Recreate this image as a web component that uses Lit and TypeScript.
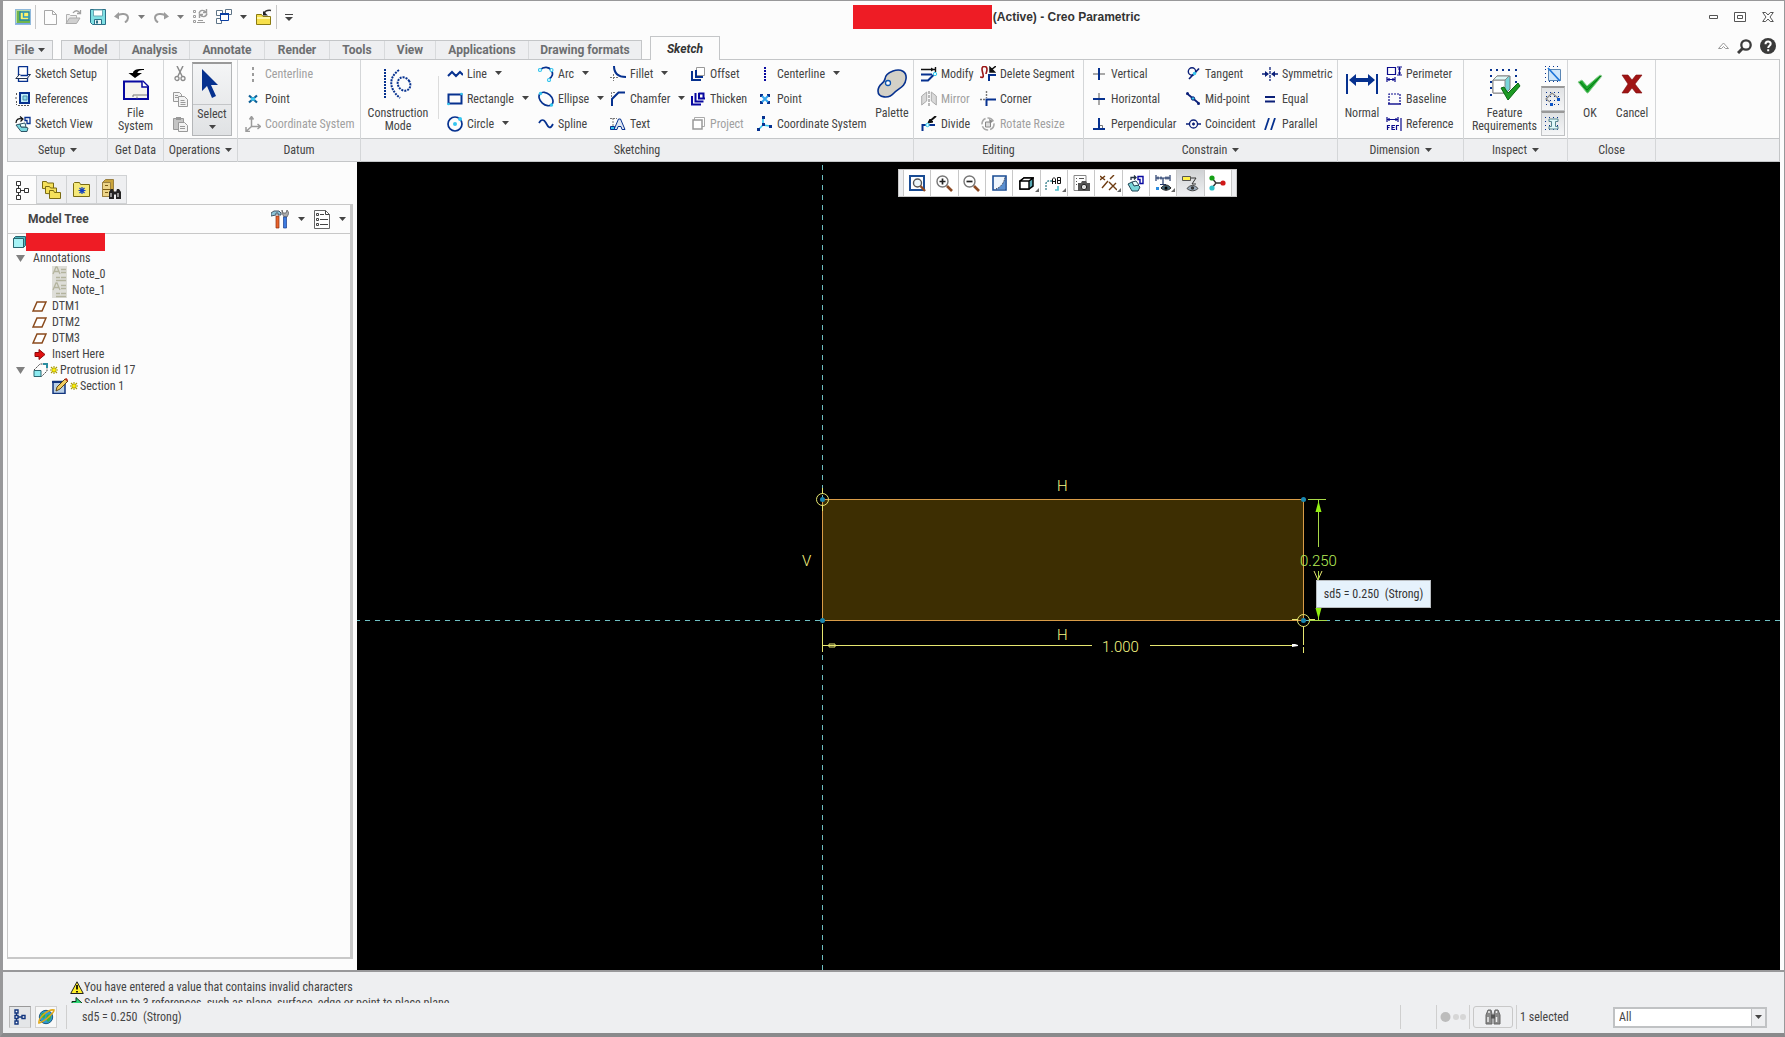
import { LitElement, html, svg, css, nothing, TemplateResult } from "lit";
import { customElement, property } from "lit/decorators.js";

const N = "#06318f";
const C = "#35c5ee";
const G = "#9c9c9c";

interface Glyph { w: number; h: number; body: TemplateResult; }
const g = (w: number, h: number, body: TemplateResult): Glyph => ({ w, h, body });

const GLYPHS: Record<string, Glyph> = {
  arrow: g(7, 4, svg`<path d="M0 0h7L3.5 4z" fill="#444"/>`),
  app: g(16, 16, svg`<rect x=".5" y=".5" width="15" height="15" fill="#b9dba0" stroke="#8fb9dc"/><path d="M2 2h4v9h9v3H2z" fill="#6fb54c"/><path d="M5 3h9v8H5z" fill="#fff36a" stroke="#1e86a8" stroke-width="1.4"/><path d="M8.500 3v5h6" fill="none" stroke="#2a9cc4" stroke-width="1.4"/><path d="M1 14.5h14" stroke="#78a5e8"/>`),
  newFile: g(13, 16, svg`<path d="M.5 1.5h8l4 4v10H.5z" fill="#fdfdfd" stroke="#a8a8a8"/><path d="M8.500 1.5v4h4" fill="none" stroke="#a8a8a8"/>`),
  open: g(17, 16, svg`<path d="M1.500 14V5.500h3l1 1h6V9" fill="#eee" stroke="#b0b0b0"/><path d="M1 14.500L4.500 9H15l-3.500 5.500z" fill="#d0d0d0" stroke="#aaa"/><path d="M8 4c2-3 5-3 7 0M15.500 1v3.500H12" fill="none" stroke="#a0a0a0" stroke-width="1.300"/>`),
  save: g(16, 16, svg`<path d="M.5 .5h15v15h-13l-2-2z" fill="#7fe0e4" stroke="#2b6f86"/><path d="M3.500 1h9v6h-9z" fill="#fff" stroke="#6aa8b4"/><path d="M4.500 10.500h7v5h-7z" fill="#e9f6f7" stroke="#2b6f86"/><path d="M6 11.500h2v3H6z" fill="#2b6f86"/>`),
  undo: g(16, 12, svg`<path d="M3 5c3-3 11-3 11 2 0 2-1 3-3 4.500" fill="none" stroke="${G}" stroke-width="2"/><path d="M0 5.500L5 1v7.500z" fill="${G}"/>`),
  redo: g(16, 12, svg`<path d="M13 5C10 2 2 2 2 7c0 2 1 3 3 4.500" fill="none" stroke="${G}" stroke-width="2"/><path d="M16 5.500L11 1v7.500z" fill="${G}"/>`),
  regen: g(16, 16, svg`<g fill="none" stroke="${G}"><path d="M1.500 1.500h2v2h-2zM1.500 6.500h2v2h-2zM1.500 11.500h2v2h-2zM5 13.500h8M6 11.500h5"/><path d="M7 4.500c1-4 5-4 7-1M15 4.500c-1 4-5 4-7 1M14.500 0v3.500H11M7.500 9V5.500H11" stroke-width="1.400"/></g>`),
  windows: g(16, 16, svg`<g fill="#fff" stroke="#5e7487"><path d="M.5 1.500h6v5h-6zM9.500 .5h6v5h-6zM.5 9.500h5v5h-5z"/></g><path d="M4.500 4.500h8v7h-8z" fill="#fff" stroke="#0b3ea2"/><path d="M4 5h9" stroke="#0b3ea2" stroke-width="2"/>`),
  folderIn: g(17, 17, svg`<path d="M1.500 15.500v-10h5l1.500 2h7.500v8z" fill="#f7e04b" stroke="#8a7a12"/><path d="M2 9h13" stroke="#fff7a8" stroke-width="2"/><path d="M9 4c2-3 4-3 7-2.500" fill="none" stroke="#333" stroke-width="1.500"/><path d="M8 2l5 4.500H8z" fill="#222"/>`),
  more: g(8, 7, svg`<path d="M0 .5h8" stroke="#444"/><path d="M0 3h8L4 7z" fill="#444"/>`),
  sketchSetup: g(16, 16, svg`<path d="M3.500 8v7.500h9V10" fill="none" stroke="${N}" stroke-width="1.300"/><path d="M4.500 8.500H15.500L12 12.500H.8z" fill="#fff" stroke="#20304c"/><path d="M3.500 .5h9v9h-7" fill="#fff" stroke="${N}" stroke-width="1.300"/><path d="M3.500 .5v8" stroke="${N}" stroke-width="1.300"/>`),
  references: g(16, 14, svg`<path d="M5 1h9v10H5z" fill="#bfeef8" stroke="${N}" stroke-width="2"/><path d="M0 6h3M1.500 1v2M1.500 9v4M3 13.500h12" stroke="#555" stroke-dasharray="2 1"/><path d="M8 4h4v4H8z" fill="#8bdcec" stroke="#4c8aa8"/>`),
  sketchView: g(16, 16, svg`<path d="M10 1.500h5v6h-3v-3h-2z" fill="#fff" stroke="${N}" stroke-width="1.300"/><path d="M1 7c0-4 3-5 6-4M5 .5L8 3 5.500 5.500" fill="none" stroke="#111" stroke-width="1.200"/><path d="M1 9l4-1 1 3h4l3 1-1 3.500H6z" fill="#7ad7df" stroke="#2e5566"/><path d="M5 8l5-1 1 4H6z" fill="#e9ffff" stroke="#2e5566"/>`),
  fileSystem: g(26, 32, svg`<path d="M1 13.500h19l5 5V31H1z" fill="#f6f3ee" stroke="#0808a0" stroke-width="2"/><path d="M19 13v6h6" fill="#fff" stroke="#0808a0" stroke-width="1.500"/><path d="M10 29v-2h14M14 28.500v2" fill="none" stroke="#777"/><path d="M12 10L5.500 5H10c0-3 4-4.500 11-4v1c-5 0-6.500 1.500-6.500 3H19z" fill="#000"/>`),
  cut: g(12, 16, svg`<path d="M3 0l5 10M9 0L4 10" stroke="#8c8c8c" stroke-width="1.500"/><g fill="none" stroke="#8c8c8c" stroke-width="1.300"><circle cx="3" cy="12.500" r="2"/><circle cx="9" cy="12.500" r="2"/></g>`),
  copy: g(16, 16, svg`<g fill="#f3f3f3" stroke="#999"><path d="M1.500 1.500h6l2 2v7h-8z"/><path d="M6.500 5.500h6l3 3v7h-9z"/><path d="M3 4.500h3M3 6.500h3M8.500 9.500h4M8.500 11.500h5M8.500 13.500h5"/></g>`),
  paste: g(16, 16, svg`<path d="M1.500 2.500h10v11h-10z" fill="#c4c4c4" stroke="#999"/><path d="M4 1h5v3H4z" fill="#999"/><path d="M6.500 6.500h6l3 3v6h-9z" fill="#f3f3f3" stroke="#999"/><path d="M8 10.500h5M8 12.500h5" stroke="#999"/>`),
  select: g(17, 30, svg`<path d="M1 0v22l5-5 5 12 4-2-5-11h7z" fill="${N}"/>`),
  centerG: g(16, 16, svg`<path d="M8 1v15" stroke="${G}" stroke-width="2" stroke-dasharray="3 3"/>`),
  pointA: g(10, 10, svg`<path d="M1 1.500l8 7M9 1.500l-8 7" stroke="#0d5f96" stroke-width="2.200"/><path d="M3 5h4" stroke="#38c8f0" stroke-width="3"/>`),
  csysG: g(16, 16, svg`<path d="M6.500 2v8.500h8M6.500 10.500L1.500 15M4.500 3.500l2-3 2 3M12.500 8l3 2.500-3 2.500M1 11v4.500h4" fill="none" stroke="${G}" stroke-width="1.500"/>`),
  construction: g(30, 32, svg`<g fill="none" stroke="${N}" stroke-width="2" stroke-dasharray="2 1"><path d="M2 1v30"/><path d="M16 2C6 9 5 20 17 30"/><ellipse cx="21" cy="16" rx="6" ry="7" transform="rotate(-35 21 16)"/></g>`),
  line: g(16, 10, svg`<path d="M1 7l4-4 4 4 4-4 3 3" fill="none" stroke="${N}" stroke-width="2"/>`),
  rect: g(16, 14, svg`<path d="M1.500 2.500h13v9h-13z" fill="none" stroke="${N}" stroke-width="2"/><circle cx="14.500" cy="2" r="1.300" fill="${C}"/><circle cx="1.500" cy="12" r="1.300" fill="${C}"/>`),
  circle: g(16, 16, svg`<circle cx="8" cy="8" r="7" fill="none" stroke="${N}" stroke-width="1.700"/><circle cx="8" cy="8" r="2" fill="${C}"/><circle cx="13" cy="3" r="2" fill="${C}"/>`),
  arc: g(16, 16, svg`<path d="M2 4c4-4 9-3 11 0 3 4 1 7-2 9" fill="none" stroke="${N}" stroke-width="1.700"/><g fill="#fff" stroke="${C}" stroke-width="1.200"><circle cx="2" cy="4" r="1.500"/><circle cx="13.500" cy="4" r="1.500"/><circle cx="11" cy="14" r="1.500"/></g>`),
  ellipse: g(16, 16, svg`<ellipse cx="8" cy="8" rx="8" ry="5.500" transform="rotate(42 8 8)" fill="none" stroke="${N}" stroke-width="1.700"/><circle cx="2.500" cy="2.500" r="1.700" fill="${C}"/><circle cx="13.500" cy="14" r="1.700" fill="${C}"/>`),
  spline: g(16, 12, svg`<path d="M1 5c2-4 5-4 7 0s4 7 7 1" fill="none" stroke="${N}" stroke-width="1.700"/>`),
  fillet: g(16, 16, svg`<path d="M4 0c0 7 4 11 12 11" fill="none" stroke="${N}" stroke-width="2"/><path d="M3.500 8v7M0 11.500h8" stroke="#777" stroke-dasharray="2 1"/>`),
  chamfer: g(16, 16, svg`<path d="M2 15V8l6.500-6.500H15" fill="none" stroke="${N}" stroke-width="2"/><path d="M1.500 6V1.500H6" fill="none" stroke="#777" stroke-dasharray="2 1"/>`),
  text: g(16, 14, svg`<path d="M4 12.500L8.500 2h2L15 12.500h-3l-1-3H8l-1 3z" fill="#dfe7f2" stroke="${N}"/><path d="M0 1.500h7M3 1v8" stroke="#777" stroke-dasharray="2 1"/><path d="M.5 9.500h4v3h-4z" fill="${C}" stroke="${N}"/>`),
  offset: g(15, 15, svg`<path d="M5.500 1.500h8v8h-8z" fill="#fff" stroke="#999"/><path d="M1 5v9h9M5 4v7h7" fill="none" stroke="${N}" stroke-width="2"/>`),
  thicken: g(15, 15, svg`<path d="M4.500 2v8.500h8" fill="none" stroke="#0808a0" stroke-width="2"/><path d="M1 5v8.500h9M8 2v5.500h6M7.500 2.500h5v5" fill="none" stroke="#0808a0" stroke-width="2"/>`),
  project: g(15, 15, svg`<path d="M3.500 1.500h10v9h-10z" fill="#fff" stroke="#aaa"/><path d="M2 4v9h9V4z" fill="#fff" stroke="#999" stroke-width="1.500"/>`),
  centerB: g(16, 16, svg`<path d="M8 1v15" stroke="#0808a0" stroke-width="2" stroke-dasharray="2 1"/>`),
  pointB: g(10, 10, svg`<path d="M0 0h3v3H0zM7 0h3v3H7zM0 7h3v3H0zM7 7h3v3H7z" fill="${N}"/><path d="M2 2l6 6M8 2L2 8" stroke="#35a5ee" stroke-width="2"/>`),
  csysB: g(16, 16, svg`<path d="M6 3v6l7 1M6 9l-4 4" fill="none" stroke="${C}" stroke-width="1.600"/><path d="M5 0h3v3H5zM12 9h3v3h-3zM0 12h3v3H0zM5 7h3v3H5z" fill="${N}"/>`),
  palette: g(32, 30, svg`<path d="M17 2c8-3 14 1 13 8-1 8-7 9-12 14-5 6-16 5-16-2 0-7 6-7 7-12 0-4 3-6 8-8z" fill="#d3d1c7" stroke="${N}" stroke-width="1.600"/><circle cx="12" cy="14" r="2.500" fill="#fff" stroke="#0b55b0" stroke-width="1.300"/>`),
  modify: g(17, 16, svg`<path d="M0 3.500h15M14.500 1v5" stroke="#111" stroke-width="1.400"/><path d="M10 1.500l3 2-3 2z" fill="#111"/><path d="M0 8.500h11" stroke="${N}" stroke-width="2"/><path d="M0 14.500h7l6-6" fill="none" stroke="${N}" stroke-width="2"/><circle cx="14" cy="8" r="1.700" fill="#dff" stroke="${C}"/>`),
  mirror: g(16, 15, svg`<path d="M.7 14V5l5-4v9zM15.300 14V5l-5-4v9z" fill="#d9d9d9" stroke="#aaa"/><path d="M8 0v15" stroke="#777" stroke-dasharray="3 1"/>`),
  divide: g(16, 16, svg`<path d="M1.500 15V9H14" fill="none" stroke="${N}" stroke-width="2"/><path d="M15 0l-7 6" stroke="#111" stroke-width="2"/><path d="M7 7l2-4 3 3z" fill="#111" stroke="#111"/><circle cx="6.500" cy="9" r="1.700" fill="#dff" stroke="${C}"/>`),
  delSeg: g(16, 15, svg`<path d="M0 11c6 2 2-4 2-8s5-3 5 0-1 4-1 5" fill="none" stroke="#9a1616" stroke-width="1.600"/><path d="M9 15V9h7" fill="none" stroke="${N}" stroke-width="2"/><path d="M16 0l-5 4M10 1.500V6h4.500z" fill="#111" stroke="#111" stroke-width="1.500"/>`),
  corner: g(16, 16, svg`<path d="M6.500 15V8.500H16" fill="none" stroke="${N}" stroke-width="2"/><path d="M6.500 0v7M0 8.500h5" stroke="#777" stroke-width="1.400" stroke-dasharray="2 1"/>`),
  rotResize: g(14, 14, svg`<circle cx="7" cy="7" r="6" fill="none" stroke="#a8a8a8" stroke-width="1.600" stroke-dasharray="7 2"/><path d="M4.500 5h5v5h-5z" fill="#ddd" stroke="#888"/><path d="M8 2l4 2-3 3z" fill="#888"/>`),
  vert: g(12, 12, svg`<path d="M0 6h12" stroke="#a8a8a8" stroke-width="2"/><path d="M6 0v12" stroke="${N}" stroke-width="2"/>`),
  horiz: g(12, 12, svg`<path d="M6 0v12" stroke="#a8a8a8" stroke-width="2"/><path d="M0 6h12" stroke="${N}" stroke-width="2"/>`),
  perp: g(12, 12, svg`<path d="M6 0v11M0 11h12" stroke="${N}" stroke-width="2"/><path d="M7 7.500h2.500V10" fill="none" stroke="#777"/>`),
  tangent: g(14, 13, svg`<circle cx="6" cy="4.500" r="3.700" fill="none" stroke="#0a1f78" stroke-width="1.400"/><path d="M13 1.500L3 12" stroke="#0a1f78" stroke-width="1.700"/><circle cx="8.500" cy="6.500" r="1.700" fill="${C}"/>`),
  midpoint: g(14, 13, svg`<path d="M1 1.500l12 10" stroke="#0a1f78" stroke-width="1.700"/><circle cx="1.500" cy="1.500" r="1.500" fill="#0a1f78"/><circle cx="12.500" cy="11.500" r="1.500" fill="#0a1f78"/><circle cx="7" cy="6.500" r="1.700" fill="${C}" stroke="#0a1f78"/>`),
  coincident: g(15, 12, svg`<circle cx="7.500" cy="6" r="4" fill="none" stroke="#0a1f78" stroke-width="1.300"/><path d="M0 6h3.500M11.500 6H15M6 6h3M7.500 4.500v3" stroke="#0a1f78" stroke-width="1.400"/>`),
  symmetric: g(16, 14, svg`<path d="M8 0v14" stroke="#0a1f78" stroke-width="1.300" stroke-dasharray="3 1"/><path d="M0 7h4M16 7h-4" stroke="#0a1f78" stroke-width="1.400"/><path d="M3 4l4 3-4 3zM13 4L9 7l4 3z" fill="#0a1f78"/>`),
  equal: g(10, 8, svg`<path d="M0 2h10M0 6.500h10" stroke="#0a1f78" stroke-width="2"/>`),
  parallel: g(12, 12, svg`<path d="M1 12L5 0M7 12l4-12" stroke="${N}" stroke-width="1.800"/>`),
  normal: g(32, 22, svg`<path d="M1 1v20M31 1v20" stroke="${N}" stroke-width="2"/><path d="M3 7l7-6v4h12V1l7 6-7 6V9H10v4z" fill="${N}"/>`),
  perimeter: g(16, 16, svg`<path d="M1.500 1.500h8v7h-8z" fill="none" stroke="#0a0a8c" stroke-width="1.200"/><path d="M1 11v5M9 11v5M1 13.500h8M3 12v3M7 12v3M11 1h5M11 9h5M13.500 1v8M12 3h3M12 7h3" stroke="#0a0a8c" stroke-width="1.200"/>`),
  baseline: g(13, 12, svg`<path d="M1 11V1h11v10" fill="none" stroke="#0a0a8c" stroke-width="1.200" stroke-dasharray="2 1"/><path d="M0 11h13" stroke="#0a0a8c" stroke-width="1.400"/>`),
  reference: g(16, 14, svg`<path d="M1 0v5M12 0v5M1 2.500h11M3 1v3M10 1v3M15 1v13" stroke="#0a0a8c" stroke-width="1.200"/><path d="M1.500 13V8.500H4M1.500 10.500H3.500M9 8.500H6V12.500H9M6 10.500h2.500M10.500 13V8.500h2.500" fill="none" stroke="#0a0a8c" stroke-width="1.200"/>`),
  feature: g(32, 32, svg`<g fill="${N}"><path d="M1 1h2v2H1zM7 1h2v2H7zM13 1h2v2h-2zM19 1h2v2h-2zM26 1h2v2h-2zM1 7h2v2H1zM1 13h2v2H1zM1 19h2v2H1zM1 26h2v2H1zM26 7h2v2h-2zM26 13h2v2h-2z"/></g><path d="M4 12l4-4h13v13l-4 4H4z" fill="#78d5d9" stroke="#777"/><path d="M4 12h12v13H4z" fill="#fff" stroke="#888"/><path d="M4 12l4-4h12l-4 4z" fill="#dff8f8" stroke="#888"/><path d="M12 20l3-1 4 6L29 15l2 3-12 14z" fill="#1d9a24" stroke="#0a6612"/>`),
  shade: g(16, 16, svg`<path d="M3.500 3.500h12v11h-12z" fill="#cfe6fa" stroke="#5a86b4"/><path d="M0 .5h16M.5 3v13M0 15.500h16" stroke="${N}" stroke-dasharray="1 3"/><path d="M3 2l12 13" stroke="#1c74d8" stroke-width="1.700"/>`),
  openEnds: g(16, 14, svg`<path d="M1 .5h15M1 4.500h15M1 8.500h15M1 12.500h15" stroke="${N}" stroke-dasharray="1 3"/><path d="M5 10L1 7l6-6 6 5" fill="none" stroke="#888" stroke-width="1.200"/><path d="M12 6h3v3h-3zM5 11h3v3H5z" fill="#0b55c8"/>`),
  overlap: g(16, 14, svg`<path d="M0 .5h16M0 4.500h16M0 8.500h16M0 12.500h16" stroke="${N}" stroke-dasharray="1 3"/><path d="M4 2h9v2.500h-2.500v5H13V12H4V9.500h2.500v-5H4z" fill="#dff8f8" stroke="#57858e"/>`),
  ok: g(26, 20, svg`<path d="M1 8l4-2 5 6L23 1l2 1L11 19h-1z" fill="#19a52a" stroke="#8fcf94"/><path d="M3 8l7 8L24 2" fill="none" stroke="#0b7a18"/>`),
  cancel: g(22, 20, svg`<path d="M1 1h6l4 5 4-5h6l-7 9 7 9h-6l-4-5-4 5H1l6-9z" fill="#a01414" stroke="#7d0c0c" stroke-width=".6"/>`),
  min: g(9, 5, svg`<path d="M.5 .5h8v3h-8z" fill="#fff" stroke="#555"/>`),
  max: g(12, 10, svg`<path d="M.5 .5h11v9H.5zM3.500 3.500h5v3h-5z" fill="#fff" stroke="#555"/>`),
  close: g(12, 10, svg`<path d="M.7 .5h3L6 3 8.300 .5h3L8 5l3.300 4.500h-3L6 7 3.700 9.500h-3L4 5z" fill="#fff" stroke="#555"/>`),
  up: g(11, 8, svg`<path d="M.5 6.500l5-5.500 5 5.500h-3l-2-2-2 2z" fill="#fff" stroke="#999"/>`),
  search: g(15, 15, svg`<circle cx="9" cy="6" r="4.700" fill="none" stroke="#3c3c3c" stroke-width="2.300"/><path d="M5.500 9.500L1 14" stroke="#3c3c3c" stroke-width="3"/>`),
  help: g(16, 16, svg`<circle cx="8" cy="8" r="8" fill="#3a3a3a"/><path d="M5.500 6.200c0-3.600 5.200-3.400 5.200-.4C10.700 7.800 8.200 7.700 8.200 10M8.200 11.200v2" fill="none" stroke="#fff" stroke-width="2"/>`),
  treeTab: g(13, 19, svg`<path d="M.5 .5h4v4h-4zM.5 7.500h4v4h-4zM.5 14.500h4v4h-4zM8.500 7.500h4v4h-4zM4.500 9.500h4M2.500 4.500v3M2.500 11.500v3" fill="#fff" stroke="#333"/>`),
  folders: g(19, 19, svg`<g fill="#f5e05a" stroke="#7a6b12"><path d="M.5 8.500v-7h4l1 1.500h6v6z"/><path d="M3.500 13.500v-7h4l1 1.500h6v6z"/><path d="M7.500 18.500v-8h4l1 2h6v6z"/></g>`),
  favorites: g(18, 17, svg`<path d="M.5 15.500v-13l1-1h5l1 2h9v12z" fill="#f5e97a" stroke="#7a6b12"/><path d="M9 6v7M5.500 9.500h7M6.500 7l5 5M11.500 7l-5 5" stroke="#1240c0" stroke-width="1.200"/>`),
  finder: g(20, 21, svg`<path d="M.5 3.500l3-3h8v14l-3 3h-8z" fill="#c9a43c" stroke="#9a8040"/><path d="M.5 3.500h8v14h-8z" fill="#ecd488" stroke="#9a8040"/><path d="M1 10.500h8M3 6.500h3M3 13.500h3" stroke="#7a5c14"/><path d="M7 13l2-3h2l1 3v7H7zM14 13l1-3h2l2 3v7h-5z" fill="#222"/><path d="M9 14v4M16 14v4" stroke="#fff"/><path d="M12 14h2" stroke="#222" stroke-width="3"/>`),
  tools: g(18, 20, svg`<path d="M0 7V4l3-2h5l2 2v2H7V4H5v2z" fill="#8cc4d8" stroke="#456"/><path d="M5 7h3v12H5z" fill="#e8642c" stroke="#8c2c10" stroke-width=".7"/><path d="M11 1l1 3h3l1-3 2 3-2 4h-3l-2-4z" fill="#aaa" stroke="#555" stroke-width=".7"/><path d="M12.500 8h3v11h-3z" fill="#3c7be0" stroke="#1a3c8c" stroke-width=".7"/>`),
  settings: g(16, 19, svg`<path d="M.5 .5h11l4 4v14H.5z" fill="#fff" stroke="#666"/><path d="M11.500 .5v4h4M6 4.500h4M6 9.500h8M6 14.500h8" fill="none" stroke="#444"/><path d="M2.500 3.500h2v2h-2zM2.500 8.500h2v2h-2zM2.500 13.500h2v2h-2z" fill="#fff" stroke="#444"/>`),
  part: g(13, 12, svg`<path d="M.5 2.500l2-2h10v9l-2 2H.5z" fill="#4fb8c0" stroke="#2a6670"/><path d="M.5 2.500h10v9H.5z" fill="#a6f3f6" stroke="#2a6670"/>`),
  twisty: g(9, 7, svg`<path d="M0 0h9L4.500 7z" fill="#808080"/>`),
  note: g(15, 16, svg`<path d="M0 0h15v16H0z" fill="#deded8"/><path d="M1 8l3-7h1l3 7M2.500 5.500h4M9 3.500h5M9 6.500h5M4 11.500h4M9 11.500h5M4 14.500h10" fill="none" stroke="#b4b49e" stroke-width="1.300"/>`),
  datum: g(15, 11, svg`<path d="M5 1h9l-4 9H1z" fill="#fff" stroke="#8a4a1c" stroke-width="1.500"/>`),
  insert: g(15, 11, svg`<path d="M3 3.500h4V.5l6 5-6 5v-3H3z" fill="#e01010" stroke="#8c0a0a"/>`),
  protrusion: g(15, 15, svg`<path d="M1 7l6-6h7v7l-6 6" fill="none" stroke="#444" stroke-dasharray="2 1"/><path d="M10 1h4v4" fill="none" stroke="#2a8ca0" stroke-width="2"/><path d="M1 7.500h7v6H1z" fill="#8ceaf0" stroke="#2a6670"/>`),
  star: g(8, 8, svg`<path d="M4 0v8M0 4h8M1 1l6 6M7 1L1 7" stroke="#a89a00" stroke-width="1.100"/><path d="M2.500 2.500h3v3h-3z" fill="#fff200"/>`),
  section: g(16, 16, svg`<path d="M1 3.500h12v12H1z" fill="#b9cfe6" stroke="#12357e" stroke-width="1.500"/><path d="M0 4h13" stroke="#12357e" stroke-width="2"/><path d="M4 13l1-4 8-8 3 2-8 8z" fill="#f0cc60" stroke="#5c4410"/><path d="M12.500 1l2-1 1.500 2-1 1.500z" fill="#c03020"/>`),
  zoomFit: g(17, 17, svg`<path d="M1 1h14v14H1z" fill="#fff" stroke="#1a4c94" stroke-width="2"/><circle cx="8.500" cy="8" r="4" fill="#eef8fb" stroke="#555" stroke-width="1.400"/><path d="M11.500 11l4.500 5" stroke="#8c4a24" stroke-width="2.400"/>`),
  zoomIn: g(17, 17, svg`<circle cx="6.500" cy="6.500" r="5.500" fill="#fff" stroke="#777" stroke-width="1.400"/><path d="M3.500 6.500h6M6.500 3.500v6" stroke="#222" stroke-width="1.700"/><path d="M11 11l5 5" stroke="#8c4a24" stroke-width="2.600"/>`),
  zoomOut: g(17, 17, svg`<circle cx="6.500" cy="6.500" r="5.500" fill="#fff" stroke="#777" stroke-width="1.400"/><path d="M3.500 6.500h6" stroke="#222" stroke-width="1.700"/><path d="M11 11l5 5" stroke="#8c4a24" stroke-width="2.600"/>`),
  repaint: g(15, 16, svg`<path d="M1 1h13v14H1z" fill="#eef5fc" stroke="#1a4c94" stroke-width="1.600"/><path d="M13 2v12H4C9 12 12 8 13 2z" fill="#5a8fd0"/><path d="M4 14C9 12 12 8 13 2" fill="none" stroke="#223" stroke-dasharray="1 1"/>`),
  display: g(15, 13, svg`<path d="M1 4l4-3h9v8l-4 3H1z" fill="#58a8b4" stroke="#000" stroke-width="1.500"/><path d="M1 4h9v8H1zM1 4l4-3h9l-4 3z" fill="#fff" stroke="#000" stroke-width="1.400"/>`),
  views: g(17, 15, svg`<path d="M1 14V7l2-2h4" fill="none" stroke="#36808c" stroke-width="1.300" stroke-dasharray="2 1"/><path d="M7.500 8V3l1.500-1.500L10.500 3V8M7.500 5.500h3M12.500 1.500v6h3V1.500h-3M12.500 4.500h3" fill="none" stroke="#111"/><path d="M13 10v4h-3" fill="none" stroke="#4fc0cc" stroke-width="1.700"/>`),
  capture: g(17, 17, svg`<path d="M1 .5h12v15H1z" fill="#fff" stroke="#888"/><path d="M3 3.500h1M3 6.500h1M3 9.500h1M6 3.500h5" stroke="#555"/><path d="M5 8h3l1-2h4l1 2h3v8H5z" fill="#555"/><circle cx="11" cy="12" r="2.700" fill="#ddd" stroke="#222"/>`),
  datums: g(17, 17, svg`<g stroke="#6e3c12" stroke-width="1.400"><path d="M0 1l5 4M5 1L0 5M14 0l-4 4M8 6L2 13M9 7l8 8M16 8l-7 7"/></g>`),
  annot: g(17, 17, svg`<path d="M11 1.500h5v7h-3v-4h-2z" fill="#fff" stroke="#0808a0" stroke-width="1.400"/><path d="M4 5V2.500h5M7 .5l2 2-2 2" fill="none" stroke="#234" stroke-width="1.300"/><path d="M1 9l4-2 2 3h4l2 2-2 4H5z" fill="#78d5d9" stroke="#245"/><path d="M5 7l4-1 3 4-5 1z" fill="#e6fdfd" stroke="#245"/>`),
  dims: g(17, 17, svg`<path d="M1 0v6M15 0v6M1 3h14M3 1.500v3M6 1.500v3M11 1.500v3M13 1.500v3M8 3v6M5 9.500h6" stroke="#223a6a" stroke-width="1.200"/><path d="M1 12h3v3H1z" fill="#2a8ce0"/><path d="M6 13c3-4 7-4 10 0-3 3-7 3-10 0z" fill="#467" stroke="#222"/><circle cx="11" cy="13" r="1.500" fill="#000"/>`),
  constraints: g(17, 17, svg`<path d="M.5 1.500h8v4h-8z" fill="#fff04a" stroke="#555"/><path d="M9 3h5l-4 6h4" fill="none" stroke="#333"/><path d="M5 13.500c3-4 8-4 11 0-3 3-8 3-11 0z" fill="#9ab" stroke="#444"/><circle cx="10.500" cy="13" r="1.700" fill="#333"/>`),
  spin: g(17, 16, svg`<path d="M3 3l4 5-4 5M7 8h7" fill="none" stroke="#333" stroke-width="1.400"/><circle cx="3" cy="3" r="2.600" fill="#16a016"/><circle cx="3" cy="13" r="2.600" fill="#2cc0c8"/><circle cx="14" cy="8" r="2.600" fill="#d01818"/>`),
  warning: g(14, 13, svg`<path d="M7 .8l6.300 11.700H.7z" fill="#ffef2a" stroke="#222"/><path d="M7 4v4.500M7 10v1.500" stroke="#000" stroke-width="1.700"/>`),
  prompt: g(12, 13, svg`<path d="M1 4.500h4v-4l6.500 6-6.500 6v-4H1z" fill="#2fd676" stroke="#0b3018"/>`),
  treeS: g(12, 16, svg`<path d="M1 1h3v3H1zM1 6.500h3v3H1zM1 12h3v3H1zM8 6.500h3v3H8zM4 8h4M2.500 4v2.500M2.500 9.500V12" fill="#fff" stroke="#12357e" stroke-width="1.400"/>`),
  globe: g(17, 16, svg`<circle cx="8" cy="8" r="6.700" fill="#2f9ad0" stroke="#1d5a80"/><path d="M3 5c3-3 5 0 4 3s-3 1-4-3zM9 6c4-2 5 1 3 5s-5 0-3-5z" fill="#38b044"/><path d="M1 14C0 9 10 0 16 1c0 3-10 12-15 13z" fill="none" stroke="#e0a818" stroke-width="1.600"/>`),
  dots: g(26, 12, svg`<circle cx="5.500" cy="6" r="5" fill="#bcbcbc"/><circle cx="16" cy="6" r="3" fill="#d6d6d6"/><circle cx="23" cy="6" r="3" fill="#d6d6d6"/>`),
  binoculars: g(16, 16, svg`<path d="M1 6l2-5h3l1 4v10H1zM9 5l1-4h3l2 5v9H9z" fill="#8a8a8a" stroke="#666"/><path d="M3 8v5M11.500 8v5M4 2v2M11.500 2v2" stroke="#eee" stroke-width="1.500"/><path d="M6 7.500h4" stroke="#555" stroke-width="4"/>`),
};

const icon = (name: string) => {
  const i = GLYPHS[name];
  return html`<svg class="glyph" aria-hidden="true" width=${i.w} height=${i.h} viewBox="0 0 ${i.w} ${i.h}">${i.body}</svg>`;
};

const sharedStyles = css`
  * { box-sizing: border-box; }
  button, select {
    font: inherit; color: inherit; background: none; border: 0; padding: 0; margin: 0;
  }
  .glyph { display: block; flex: none; }
`;

/** A small ribbon command: icon, caption and an optional menu arrow. */
@customElement("ribbon-command")
export class RibbonCommand extends LitElement {
  @property() icon = "";
  @property() label = "";
  @property({ type: Boolean }) menu = false;
  @property({ type: Boolean }) disabled = false;
  static styles = [sharedStyles, css`
    :host { display: flex; height: 25px; }
    button { display: flex; align-items: center; white-space: nowrap; line-height: 16px; }
    button:disabled { color: #a0a0a0; }
    .slot { width: 16px; margin-right: 4px; display: flex; justify-content: center; }
    .menu { margin-left: 8px; margin-bottom: 2px; }
  `];
  render() {
    return html`<button ?disabled=${this.disabled}>
      <span class="slot">${icon(this.icon)}</span>${this.label}
      ${this.menu ? html`<span class="menu">${icon("arrow")}</span>` : nothing}
    </button>`;
  }
}

type Cmd = [icon: string, label: string, flag?: "menu" | "off"];
const column = (list: Cmd[]) => html`<div class="col">${list.map(
  ([i, l, f]) => html`<ribbon-command icon=${i} label=${l} ?menu=${f === "menu"} ?disabled=${f === "off"}></ribbon-command>`,
)}</div>`;
const big = (i: string, ...lines: string[]) => html`<button class="big">
  <span class="big-icon">${icon(i)}</span>${lines.map((l) => html`<span>${l}</span>`)}</button>`;

@customElement("app-root")
export class AppRoot extends LitElement {
  static styles = [sharedStyles, css`
    :host {
      display: block; color: #444; background: #fcfcfc;
      font: 12px/16px "Roboto Condensed", "Liberation Sans", sans-serif;
    }
    .app {
      min-height: 100vh; display: flex; flex-direction: column;
      border: solid #98989a; border-width: 1px 1px 4px 3px; border-bottom-color: #8a8a8c;
    }
    .titlebar { height: 32px; display: grid; grid-template-columns: auto 1fr auto; align-items: center; }
    .quick { display: flex; align-items: center; gap: 8px; padding-left: 12px; }
    .quick button { min-width: 7px; }
    .quick .dim { opacity: .7; }
    .rule { width: 1px; height: 24px; margin-left: -4px; background: #c8c8c8; }
    .title { margin: 0; padding-right: 9px; justify-self: center; display: flex; align-items: center; font: bold 12px/16px "Liberation Sans", sans-serif; color: #333; }
    .mask { background: #ee1c25; }
    .title .mask { width: 139px; height: 24px; margin-right: 1px; }
    .window { display: flex; justify-content: flex-end; align-items: center; gap: 16px; padding-right: 10px; }

    .tabrow { height: 26px; display: flex; align-items: flex-end; padding: 0 4px; color: #6c6e70; font: bold 12px/18px Roboto, "Liberation Sans", sans-serif; }
    .file { height: 19px; width: 46px; display: flex; align-items: center; justify-content: center; gap: 4px; background: #eeeff1; border: 1px solid #c4c6c8; border-bottom: 0; }
    .tabs { display: grid; grid-template-columns: 57px 70px 75px 65px 55px 51px 93px 113px; margin: 0 8px; height: 19px; border: 1px solid #c4c6c8; border-width: 1px 1px 0; }
    .tabs button { background: #eeeff1; border-left: 1px solid #d8dadc; white-space: nowrap; }
    .tabs button:first-child { border-left: 0; }
    .active { width: 70px; height: 24px; margin-bottom: -1px; z-index: 1; background: #fcfcfc; border: 1px solid #c4c6c8; border-bottom: 0; color: #333; font-style: italic; }
    .aids { margin-left: auto; display: flex; align-items: center; gap: 8px; padding: 0 4px 5px 0; }

    .ribbon {
      margin: 0 4px; border: 1px solid #c4c6c8; border-width: 1px 1px 0; display: grid;
      grid-template-columns: 100px 56px 74px 123px 553px 170px 254px 126px 104px 88px 1fr;
    }
    .group { display: flex; flex-direction: column; border-right: 1px solid #d4d6d8; }
    .group:last-child { border-right: 0; }
    .body { height: 78px; padding: 1px 0 2px 7px; display: grid; align-content: start; }
    .caption { height: 24px; border: solid #c4c6c8; border-width: 1px 0; background: #eeeff1; display: flex; align-items: center; justify-content: center; gap: 5px; }
    .single { padding-left: 0; }
    .b-ops { grid-template-columns: 24px 40px; padding-left: 4px; }
    .b-sketch { grid-template-columns: 66px 16px 91px 72px 80px 67px 114px 1fr; padding-left: 4px; }
    .b-edit { grid-template-columns: 59px 1fr; }
    .b-constrain { grid-template-columns: 94px 77px 1fr; }
    .b-dim { grid-template-columns: 40px 1fr; padding-left: 4px; column-gap: 4px; }
    .b-inspect { grid-template-columns: 73px 24px; padding-left: 4px; }
    .b-close { grid-template-columns: 42px 42px; padding-left: 1px; }
    .stack { display: grid; grid-auto-rows: 25px; }
    .stack button { display: grid; place-items: center; }
    .stack .on { background: linear-gradient(#e0e2e4, #f5f6f7); border: 1px solid #c0c2c4; border-top: 2px solid #999; }
    .big { display: flex; flex-direction: column; align-items: center; line-height: 13px; height: 75px; white-space: nowrap; }
    .big-icon { height: 46px; display: grid; place-items: center; }
    .pick { height: 74px; margin-top: 1px; border: 1px solid #b4b6b8; border-top: 2px solid #999; background: linear-gradient(#f4f5f6, #e0e2e4); display: flex; flex-direction: column; align-items: center; }
    .pick .face { height: 41px; align-self: stretch; display: grid; place-items: center; border-bottom: 1px solid #c4c6c8; padding-right: 6px; }
    .pick .name { padding: 1px 0 3px; }
    .divider { width: 1px; height: 43px; margin: 15px 0 0 7px; background: #dcdcdc; }

    .main { flex: 1; display: flex; border-bottom: 2px solid #98989a; padding-right: 4px; }
    .side { width: 354px; padding: 13px 4px 11px; display: flex; flex-direction: column; }
    .side-tabs { display: flex; height: 29px; }
    .side-tabs button { width: 30px; display: grid; place-items: center; background: #eeeff1; border: 1px solid #d0d2d4; border-left: 0; }
    .side-tabs button:first-child { background: #fcfcfc; border-left: 1px solid #c4c6c8; border-bottom: 0; }
    .panel { flex: 1; border: 1px solid #c8c8c8; border-width: 0 3px 2px 1px; }
    .panel-head { height: 30px; border: solid #c8c8c8; border-width: 1px 0; display: flex; align-items: center; gap: 9px; padding: 0 4px 0 20px; }
    .panel-head h2 { margin: 0 auto 0 0; font: bold 12px/16px Roboto, "Liberation Sans", sans-serif; }
    .tree { list-style: none; margin: 0; padding: 0; }
    .tree li { height: 16px; display: flex; align-items: center; white-space: nowrap; }
    .tree .glyph { margin-right: 5px; }
    .tree .mask { width: 79px; height: 18px; margin-left: -5px; }
    .lv0 { padding-left: 5px; }
    .lv1 { padding-left: 8px; }
    .lv2 { padding-left: 24px; }
    .lv3 { padding-left: 44px; }
    .tree .lv1 .glyph:first-child { margin-right: 8px; }
    .tree .tight .glyph { margin-right: 2px; }

    .canvas { flex: 1; min-width: 0; position: relative; background: #000; overflow: hidden; }
    .canvas > svg { position: absolute; width: 100%; height: 100%; }
    .canvas text { font: 300 15px Roboto, "Liberation Sans", sans-serif; }
    .view-tools { position: absolute; left: 541px; top: 7px; width: 339px; height: 28px; display: flex; border: 1px solid #c8c8c8; background: #eeeff1; padding: 0 4px; }
    .view-tools button { flex: 1; display: grid; place-items: center; background: #fff; border-left: 1px solid #c8c8c8; position: relative; }
    .view-tools button:last-child { border-right: 1px solid #c8c8c8; }
    .view-tools .on { background: linear-gradient(#d0d2d4, #f0f1f3); }
    .view-tools .more::after { content: ""; position: absolute; right: 1px; bottom: 4px; border: 2px solid; border-color: transparent #666 #666 transparent; }
    .tip { position: absolute; left: 959px; top: 418px; width: 115px; height: 28px; background: #e6f2fc; border: 1px solid #b8bcc0; display: grid; place-items: center; white-space: pre; color: #333; }

    .status { background: #eeeff1; }
    .messages { height: 31px; padding-top: 7px; padding-left: 67px; overflow: hidden; }
    .messages p { margin: 0; height: 16px; display: flex; align-items: center; }
    .messages .glyph { width: 14px; }
    .bar { height: 30px; display: flex; align-items: center; padding-bottom: 2px; }
    .toggle { width: 22px; height: 22px; margin-left: 4px; display: grid; place-items: center; border: 1px solid #d0d0d0; background: #f8f8f8; }
    .toggle.on { margin-left: 6px; border-color: #999 #b8b8b8 #d8d8d8; background: #e4e6e8; }
    .sep { width: 1px; height: 24px; background: #cfcfcf; }
    .after-toggles { margin-left: 9px; }
    .before-dots { margin: 0 3px 0 35px; }
    .around-find { margin: 0 3px; }
    .hint { flex: 1; padding-left: 15px; white-space: pre; }
    .count { width: 93px; }
    .find { width: 40px; height: 22px; display: grid; place-items: center; border: 1px solid #c8c8c8; border-radius: 3px; }
    .filter { width: 154px; height: 21px; margin-right: 17px; position: relative; border: 2px solid #c0c2c4; background: #fff; display: flex; }
    .filter select { appearance: none; width: 100%; padding-left: 4px; line-height: 16px; }
    .filter span { position: absolute; right: 0; top: 0; bottom: 0; width: 14px; display: grid; place-items: center; border-left: 1px solid #c0c2c4; background: #eeeff1; pointer-events: none; }
  `];

  private group(cls: string, caption: string, menu: boolean, body: TemplateResult | TemplateResult[]) {
    return html`<section class="group"><div class="body ${cls}">${body}</div>
      <div class="caption">${caption}${menu ? icon("arrow") : nothing}</div></section>`;
  }

  private ribbon() {
    return html`<div class="ribbon">
      ${this.group("", "Setup", true, column([["sketchSetup", "Sketch Setup"], ["references", "References"], ["sketchView", "Sketch View"]]))}
      ${this.group("single", "Get Data", false, big("fileSystem", "File", "System"))}
      ${this.group("b-ops", "Operations", true, html`
        <div class="stack">
          <button aria-label="Cut" disabled>${icon("cut")}</button>
          <button aria-label="Copy" disabled>${icon("copy")}</button>
          <button aria-label="Paste" disabled>${icon("paste")}</button>
        </div>
        <button class="pick"><span class="face">${icon("select")}</span><span class="name">Select</span>${icon("arrow")}</button>`)}
      ${this.group("", "Datum", false, column([["centerG", "Centerline", "off"], ["pointA", "Point"], ["csysG", "Coordinate System", "off"]]))}
      ${this.group("b-sketch", "Sketching", false, html`
        ${big("construction", "Construction", "Mode")}
        <div class="divider"></div>
        ${column([["line", "Line", "menu"], ["rect", "Rectangle", "menu"], ["circle", "Circle", "menu"]])}
        ${column([["arc", "Arc", "menu"], ["ellipse", "Ellipse", "menu"], ["spline", "Spline"]])}
        ${column([["fillet", "Fillet", "menu"], ["chamfer", "Chamfer", "menu"], ["text", "Text"]])}
        ${column([["offset", "Offset"], ["thicken", "Thicken"], ["project", "Project", "off"]])}
        ${column([["centerB", "Centerline", "menu"], ["pointB", "Point"], ["csysB", "Coordinate System"]])}
        ${big("palette", "Palette")}`)}
      ${this.group("b-edit", "Editing", false, html`
        ${column([["modify", "Modify"], ["mirror", "Mirror", "off"], ["divide", "Divide"]])}
        ${column([["delSeg", "Delete Segment"], ["corner", "Corner"], ["rotResize", "Rotate Resize", "off"]])}`)}
      ${this.group("b-constrain", "Constrain", true, html`
        ${column([["vert", "Vertical"], ["horiz", "Horizontal"], ["perp", "Perpendicular"]])}
        ${column([["tangent", "Tangent"], ["midpoint", "Mid-point"], ["coincident", "Coincident"]])}
        ${column([["symmetric", "Symmetric"], ["equal", "Equal"], ["parallel", "Parallel"]])}`)}
      ${this.group("b-dim", "Dimension", true, html`
        ${big("normal", "Normal")}
        ${column([["perimeter", "Perimeter"], ["baseline", "Baseline"], ["reference", "Reference"]])}`)}
      ${this.group("b-inspect", "Inspect", true, html`
        ${big("feature", "Feature", "Requirements")}
        <div class="stack">
          <button aria-label="Shade closed loops">${icon("shade")}</button>
          <button class="on" aria-label="Highlight open ends">${icon("openEnds")}</button>
          <button class="on" aria-label="Overlapping geometry">${icon("overlap")}</button>
        </div>`)}
      ${this.group("b-close", "Close", false, html`${big("ok", "OK")}${big("cancel", "Cancel")}`)}
      <section class="group"><div class="body"></div><div class="caption"></div></section>
    </div>`;
  }

  private titlebar() {
    const qb = (i: string, l: string, off = false) => html`<button class=${off ? "dim" : ""} aria-label=${l}>${icon(i)}</button>`;
    return html`<header class="titlebar">
      <div class="quick">
        ${icon("app")}<div class="rule"></div>
        ${qb("newFile", "New")}${qb("open", "Open")}${qb("save", "Save")}
        ${qb("undo", "Undo")}${qb("arrow", "Undo list", true)}
        ${qb("redo", "Redo")}${qb("arrow", "Redo list", true)}
        ${qb("regen", "Regenerate")}${qb("windows", "Windows")}${qb("arrow", "Window list")}
        ${qb("folderIn", "Working directory")}<div class="rule"></div>${qb("more", "Customize toolbar")}
      </div>
      <h1 class="title"><span class="mask"></span>(Active) - Creo Parametric</h1>
      <div class="window">
        <button aria-label="Minimize">${icon("min")}</button>
        <button aria-label="Restore">${icon("max")}</button>
        <button aria-label="Close">${icon("close")}</button>
      </div>
    </header>`;
  }

  private tree() {
    return html`<ul class="tree">
      <li class="lv0">${icon("part")}<span class="mask"></span></li>
      <li class="lv1">${icon("twisty")}Annotations</li>
      ${["Note_0", "Note_1"].map((n) => html`<li class="lv3">${icon("note")}${n}</li>`)}
      ${["DTM1", "DTM2", "DTM3"].map((n) => html`<li class="lv2">${icon("datum")}${n}</li>`)}
      <li class="lv2">${icon("insert")}Insert Here</li>
      <li class="lv1 tight">${icon("twisty")}${icon("protrusion")}${icon("star")}Protrusion id 17</li>
      <li class="lv3 tight">${icon("section")}${icon("star")}Section 1</li>
    </ul>`;
  }

  private canvas() {
    const tools: [string, string, string][] = [
      ["zoomFit", "Refit", ""], ["zoomIn", "Zoom in", ""], ["zoomOut", "Zoom out", ""], ["repaint", "Repaint", ""],
      ["display", "Display style", "more"], ["views", "Saved orientations", "more"], ["capture", "View manager", ""],
      ["datums", "Datum display", "more"], ["annot", "Sketch view", ""], ["dims", "Sketcher display", "more"],
      ["constraints", "Annotation display", "on"], ["spin", "Spin center", ""],
    ];
    const y = "#e6e670";
    return html`<main class="canvas">
      <svg>
        <g stroke="#6fc0c4" stroke-dasharray="5 5">
          <path d="M465.500 3V2000"/><path d="M-2 458.500H4000"/>
        </g>
        <rect x="465.500" y="337.500" width="481" height="121" fill="#3d2e02" stroke="#d99c48"/>
        <g stroke=${y} fill="none">
          <circle cx="465.500" cy="337.500" r="6"/><circle cx="946.500" cy="458.500" r="6"/>
          <path d="M465.500 326v6M465.500 343v6M935 457.500h6M952 457.500h6"/>
          <path d="M465.500 462v28M946.500 464v19M946.500 485v6M466 483.500h269M793 483.500h142"/>
          <path d="M472 482h6v3h-6z"/>
          <path d="M957 409l4 9 4-9"/>
        </g>
        <path d="M935 482h3l3 1v1l-6 1z" fill="#fff"/>
        <g stroke="#a8d848" fill="none">
          <path d="M951 337.500h18M952 458.500h18M961.500 338v47M961.500 409v49"/>
        </g>
        <path d="M961.500 339l3 11h-6zM961.500 457l3-11h-6z" fill="#92ee12"/>
        <g fill="#1b86ae"><circle cx="465.500" cy="337.500" r="2.500"/><circle cx="946.500" cy="337.500" r="2.500"/><circle cx="465.500" cy="458.500" r="2.500"/><circle cx="946.500" cy="458.500" r="2.500"/></g>
        <g fill="#f8f884">
          <text x="700" y="329">H</text><text x="700" y="478">H</text><text x="445" y="404">V</text>
          <text x="745" y="490">1.000</text><text x="943" y="404" fill="#b8ee58">0.250</text>
        </g>
      </svg>
      <div class="view-tools">${tools.map(([i, l, c]) => html`<button class=${c} aria-label=${l}>${icon(i)}</button>`)}</div>
      <div class="tip">sd5 = 0.250  (Strong)</div>
    </main>`;
  }

  render() {
    return html`<div class="app">
      ${this.titlebar()}
      <nav class="tabrow">
        <button class="file">File ${icon("arrow")}</button>
        <div class="tabs">${["Model", "Analysis", "Annotate", "Render", "Tools", "View", "Applications", "Drawing formats"].map((t) => html`<button>${t}</button>`)}</div>
        <button class="active">Sketch</button>
        <div class="aids">
          <button aria-label="Minimize ribbon">${icon("up")}</button>
          <button aria-label="Command search">${icon("search")}</button>
          <button aria-label="Help">${icon("help")}</button>
        </div>
      </nav>
      ${this.ribbon()}
      <div class="main">
        <aside class="side">
          <div class="side-tabs">
            <button aria-label="Model Tree">${icon("treeTab")}</button>
            <button aria-label="Folder Browser">${icon("folders")}</button>
            <button aria-label="Favorites">${icon("favorites")}</button>
            <button aria-label="Search files">${icon("finder")}</button>
          </div>
          <div class="panel">
            <div class="panel-head"><h2>Model Tree</h2>
              <button aria-label="Tree tools">${icon("tools")}</button><button aria-label="Tools menu">${icon("arrow")}</button>
              <button aria-label="Tree settings">${icon("settings")}</button><button aria-label="Settings menu">${icon("arrow")}</button>
            </div>
            ${this.tree()}
          </div>
        </aside>
        ${this.canvas()}
      </div>
      <footer class="status">
        <div class="messages">
          <p>${icon("warning")}You have entered a value that contains invalid characters</p>
          <p>${icon("prompt")}Select up to 3 references, such as plane, surface, edge or point to place plane.</p>
        </div>
        <div class="bar">
          <button class="toggle on" aria-label="Show navigator">${icon("treeS")}</button>
          <button class="toggle" aria-label="Show browser">${icon("globe")}</button>
          <div class="sep after-toggles"></div>
          <div class="hint">sd5 = 0.250  (Strong)</div>
          <div class="sep"></div><div class="sep before-dots"></div>
          ${icon("dots")}
          <div class="sep around-find"></div>
          <button class="find" aria-label="Find">${icon("binoculars")}</button>
          <div class="sep around-find"></div>
          <div class="count">1 selected</div>
          <label class="filter"><select aria-label="Selection filter"><option>All</option></select><span>${icon("arrow")}</span></label>
        </div>
      </footer>
    </div>`;
  }
}
